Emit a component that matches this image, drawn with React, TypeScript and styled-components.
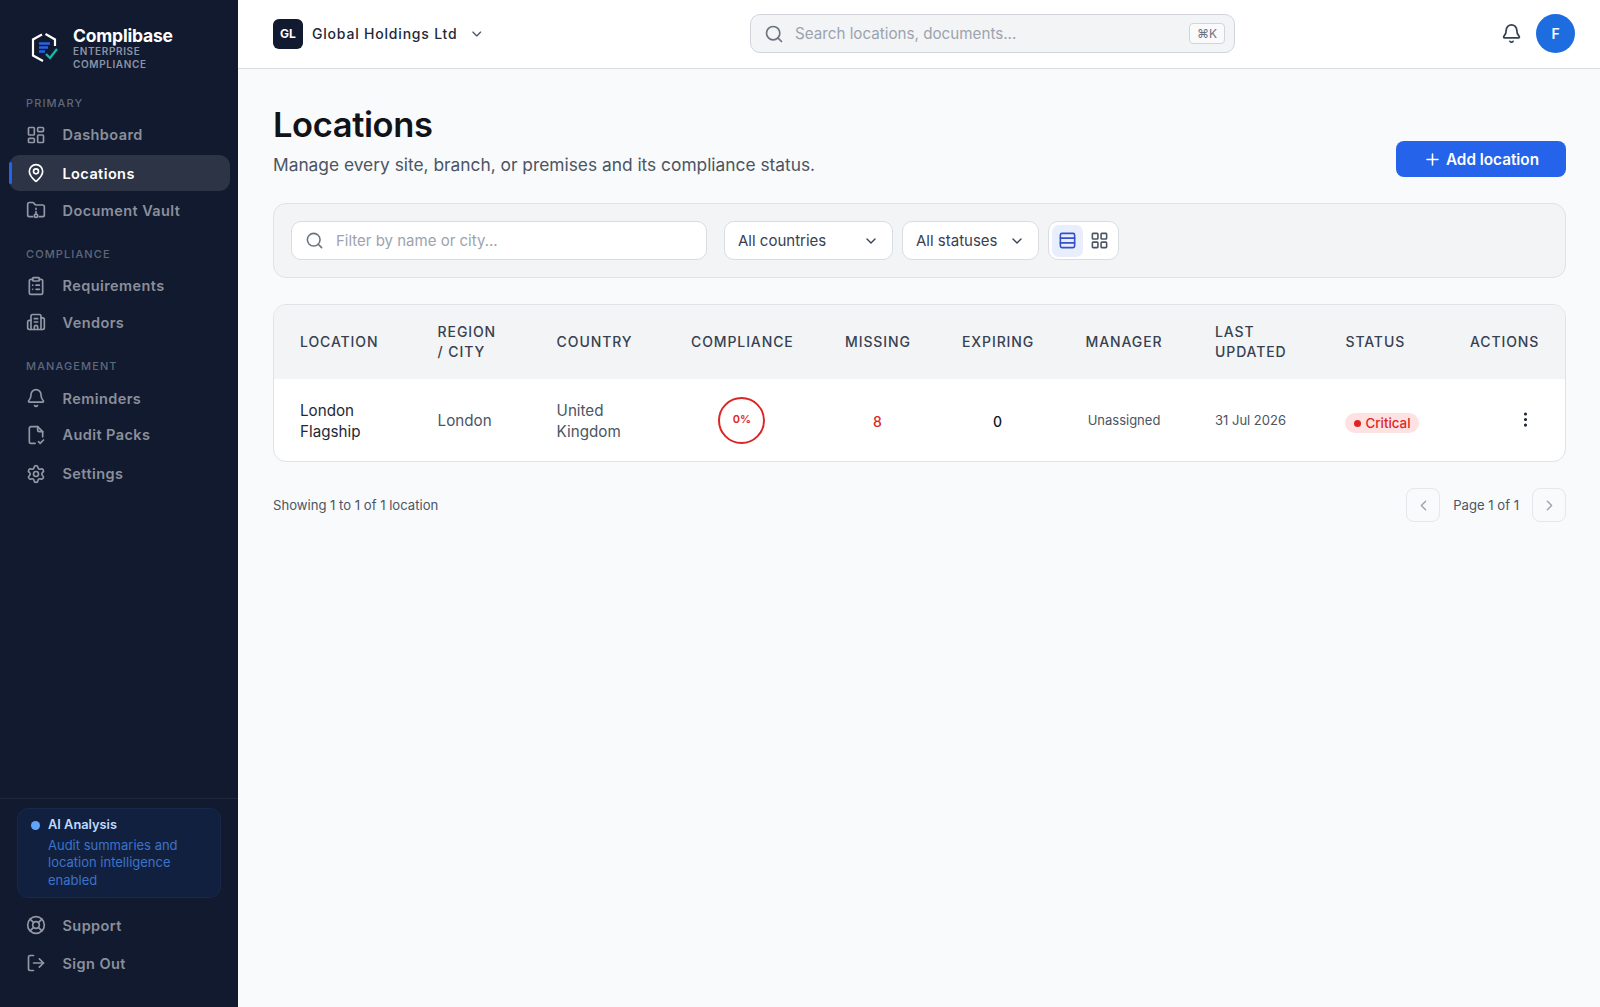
import React from "react";
import styled, { createGlobalStyle } from "styled-components";
import {
  Bell,
  Building2,
  ChevronDown,
  ChevronLeft,
  ChevronRight,
  ClipboardList,
  EllipsisVertical,
  LayoutDashboard,
  LayoutGrid,
  LifeBuoy,
  LogOut,
  MapPin,
  Plus,
  Rows3,
  Search,
  Settings,
} from "lucide-react";

const GlobalStyle = createGlobalStyle`
  * { box-sizing: border-box; }
  html, body { margin: 0; padding: 0; height: 100%; }
  body { font-family: Inter, "Liberation Sans", sans-serif; background: #f9fafb; color: #111827; }
`;

function AuditIcon() {
  return (
    <svg width="20" height="20" viewBox="0 0 24 24" fill="none" stroke="currentColor" strokeWidth="2" strokeLinecap="round" strokeLinejoin="round">
      <path d="M11 22H6a2 2 0 0 1-2-2V4a2 2 0 0 1 2-2h8l6 6v6" />
      <path d="M14 2v4a2 2 0 0 0 2 2h4" />
      <path d="m15 20 2 2 4-4" />
    </svg>
  );
}

function VaultIcon() {
  return (
    <svg width="20" height="20" viewBox="0 0 24 24" fill="none" stroke="currentColor" strokeWidth="2" strokeLinecap="round" strokeLinejoin="round">
      <path d="M8 20H4a2 2 0 0 1-2-2V5a2 2 0 0 1 2-2h3.9a2 2 0 0 1 1.69.9l.81 1.2a2 2 0 0 0 1.67.9H20a2 2 0 0 1 2 2v10a2 2 0 0 1-2 2h-4" />
      <path d="M12 10v1M12 14v2" />
      <circle cx="12" cy="19" r="2" />
    </svg>
  );
}

function Logo() {
  return (
    <svg width="30" height="32" viewBox="0 0 30 32" fill="none">
      <path d="M12 2.5 3 7.5v16l10 5.5" stroke="#fff" strokeWidth="2.2" />
      <path d="M15.5 2 25 7.5V14" stroke="#fff" strokeWidth="2.2" />
      <path d="M9 11.5h11M9 15.5h9M9 19.5h6" stroke="#2563eb" strokeWidth="2.4" />
      <path d="M16 22l4 4 7-9" stroke="#14b8a6" strokeWidth="2.4" />
    </svg>
  );
}

export default function App() {
  return (
    <>
      <GlobalStyle />
      <Shell>
        <Sidebar>
          <Brand>
            <Logo />
            <BrandText>
              <BrandName>Complibase</BrandName>
              <BrandTag>
                ENTERPRISE
                <br />
                COMPLIANCE
              </BrandTag>
            </BrandText>
          </Brand>
          <Section>
            <SectionLabel>PRIMARY</SectionLabel>
            <NavItem>
              <LayoutDashboard size={20} />
              Dashboard
            </NavItem>
            <NavItem $active $push>
              <MapPin size={20} />
              Locations
            </NavItem>
            <NavItem>
              <VaultIcon />
              Document Vault
            </NavItem>
          </Section>
          <Section>
            <SectionLabel>COMPLIANCE</SectionLabel>
            <NavItem>
              <ClipboardList size={20} />
              Requirements
            </NavItem>
            <NavItem>
              <Building2 size={20} />
              Vendors
            </NavItem>
          </Section>
          <Section>
            <SectionLabel>MANAGEMENT</SectionLabel>
            <NavItem>
              <Bell size={20} />
              Reminders
            </NavItem>
            <NavItem>
              <AuditIcon />
              Audit Packs
            </NavItem>
            <NavItem $push>
              <Settings size={20} />
              Settings
            </NavItem>
          </Section>
          <SidebarFoot>
            <AiCard>
              <AiDot />
              <div>
                <AiTitle>AI Analysis</AiTitle>
                <AiText>Audit summaries and location intelligence enabled</AiText>
              </div>
            </AiCard>
            <NavItem>
              <LifeBuoy size={20} />
              Support
            </NavItem>
            <NavItem>
              <LogOut size={20} />
              Sign Out
            </NavItem>
          </SidebarFoot>
        </Sidebar>

        <Main>
          <TopBar>
            <OrgSwitch>
              <OrgBadge>GL</OrgBadge>
              <OrgName>Global Holdings Ltd</OrgName>
              <ChevronDown size={16} color="#4b5563" />
            </OrgSwitch>
            <GlobalSearch>
              <Search size={20} color="#6b7280" />
              <GlobalSearchText>Search locations, documents...</GlobalSearchText>
              <Kbd>⌘K</Kbd>
            </GlobalSearch>
            <TopActions>
              <Bell size={21} color="#374151" />
              <Avatar>F</Avatar>
            </TopActions>
          </TopBar>

          <Content>
            <PageHead>
              <div>
                <PageTitle>Locations</PageTitle>
                <PageSub>Manage every site, branch, or premises and its compliance status.</PageSub>
              </div>
              <AddButton>
                <Plus size={19} />
                Add location
              </AddButton>
            </PageHead>

            <FilterCard>
              <FilterInput>
                <Search size={19} color="#6b7280" />
                <FilterPlaceholder>Filter by name or city...</FilterPlaceholder>
              </FilterInput>
              <Select $width={169}>
                All countries
                <ChevronDown size={16} color="#374151" />
              </Select>
              <Select $width={137}>
                All statuses
                <ChevronDown size={16} color="#374151" />
              </Select>
              <ViewToggle>
                <ViewButton $active>
                  <Rows3 size={19} />
                </ViewButton>
                <ViewButton>
                  <LayoutGrid size={19} />
                </ViewButton>
              </ViewToggle>
            </FilterCard>

            <TableCard>
              <Table>
                <colgroup>
                  {[137.6, 119, 134.4, 154, 117, 123, 130, 130.5, 124.5, 121].map((w, i) => (
                    <col key={i} style={{ width: w }} />
                  ))}
                </colgroup>
                <thead>
                  <tr>
                    <Th>LOCATION</Th>
                    <Th>REGION / CITY</Th>
                    <Th>COUNTRY</Th>
                    <Th $center>COMPLIANCE</Th>
                    <Th $center>MISSING</Th>
                    <Th $center>EXPIRING</Th>
                    <Th $center>MANAGER</Th>
                    <Th>LAST UPDATED</Th>
                    <Th>STATUS</Th>
                    <Th>ACTIONS</Th>
                  </tr>
                </thead>
                <tbody>
                  <tr>
                    <Td $strong>London Flagship</Td>
                    <Td>London</Td>
                    <Td>United Kingdom</Td>
                    <Td $center>
                      <Gauge>0%</Gauge>
                    </Td>
                    <Td $center>
                      <Count $red>8</Count>
                    </Td>
                    <Td $center>
                      <Count>0</Count>
                    </Td>
                    <Td $center $small>Unassigned</Td>
                    <Td $small>31 Jul 2026</Td>
                    <Td>
                      <Badge>
                        <BadgeDot />
                        Critical
                      </Badge>
                    </Td>
                    <Td>
                      <Kebab>
                        <EllipsisVertical size={19} />
                      </Kebab>
                    </Td>
                  </tr>
                </tbody>
              </Table>
            </TableCard>

            <TableFoot>
              <span>Showing 1 to 1 of 1 location</span>
              <Pager>
                <PageButton>
                  <ChevronLeft size={17} />
                </PageButton>
                <PageText>Page 1 of 1</PageText>
                <PageButton>
                  <ChevronRight size={17} />
                </PageButton>
              </Pager>
            </TableFoot>
          </Content>
        </Main>
      </Shell>
    </>
  );
}

const Shell = styled.div`
  display: flex;
  height: 100vh;
  overflow: hidden;
`;

const Sidebar = styled.aside`
  width: 238px;
  flex: none;
  background: #111a2e;
  display: flex;
  flex-direction: column;
  padding: 0 8px 0 9px;
`;

const Brand = styled.div`
  display: flex;
  align-items: flex-start;
  gap: 14px;
  padding: 26px 0 0 21px;
  height: 92px;
  svg {
    margin: 6px 0 0 0;
    flex: none;
  }
`;

const BrandText = styled.div`
  margin-left: -1px;
`;

const BrandName = styled.div`
  color: #fff;
  font-size: 17.5px;
  font-weight: 700;
  line-height: 19px;
  letter-spacing: -0.2px;
`;

const BrandTag = styled.div`
  color: #8b93a7;
  font-size: 10px;
  font-weight: 600;
  line-height: 13px;
  letter-spacing: 0.62px;
`;

const Section = styled.div`
  display: flex;
  flex-direction: column;
  gap: 0.7px;
  margin-bottom: 15px;
`;

const SectionLabel = styled.div`
  color: #5f687b;
  font-size: 11px;
  font-weight: 500;
  letter-spacing: 1.1px;
  line-height: 14px;
  padding: 4px 0 6px 17px;
`;

const NavItem = styled.div<{ $active?: boolean; $push?: boolean }>`
  position: relative;
  display: flex;
  align-items: center;
  flex: none;
  gap: 17px;
  height: 36px;
  margin-top: ${(p) => (p.$push ? "2px" : "0")};
  padding-left: 16.5px;
  border-radius: 11px;
  font-size: 14.5px;
  font-weight: 600;
  letter-spacing: 0.42px;
  color: ${(p) => (p.$active ? "#ffffff" : "#8b8f9b")};
  background: ${(p) => (p.$active ? "#2c3445" : "transparent")};
  svg {
    flex: none;
    color: ${(p) => (p.$active ? "#ffffff" : "#9298a5")};
  }
  ${(p) =>
    p.$active
      ? `&::before {
    content: "";
    position: absolute;
    left: 0;
    top: 7px;
    bottom: 7px;
    width: 3px;
    border-radius: 2px;
    background: #2563eb;
  }`
      : ""}
`;

const SidebarFoot = styled.div`
  margin: auto -8px 0 -9px;
  padding: 9px 8px 26px 9px;
  border-top: 1px solid #1f2839;
  display: flex;
  flex-direction: column;
  gap: 2px;
`;

const AiCard = styled.div`
  display: flex;
  gap: 8px;
  margin: 0 9px 7px 8px;
  padding: 7px 12px 8px 13px;
  border: 1px solid #18274a;
  border-radius: 11px;
  background: #122040;
`;

const AiDot = styled.span`
  width: 9px;
  height: 9px;
  margin-top: 5px;
  flex: none;
  border-radius: 50%;
  background: #60a5fa;
`;

const AiTitle = styled.div`
  color: #bfdbfe;
  font-size: 12.8px;
  font-weight: 600;
  line-height: 18px;
`;

const AiText = styled.div`
  color: #3b73c9;
  font-size: 13px;
  line-height: 17.4px;
  margin-top: 3px;
`;

const Main = styled.div`
  flex: 1;
  min-width: 0;
  display: flex;
  flex-direction: column;
`;

const TopBar = styled.header`
  height: 69px;
  flex: none;
  background: #fff;
  border-bottom: 1px solid #d9dce1;
  display: flex;
  align-items: center;
  justify-content: space-between;
  padding: 0 25px 1px 35px;
`;

const OrgSwitch = styled.div`
  display: flex;
  align-items: center;
  gap: 9px;
  width: 211px;
`;

const OrgBadge = styled.div`
  width: 30px;
  height: 30px;
  flex: none;
  border-radius: 6px;
  background: #111a2e;
  color: #fff;
  font-size: 12px;
  font-weight: 700;
  display: flex;
  align-items: center;
  justify-content: center;
`;

const OrgName = styled.div`
  font-size: 14px;
  font-weight: 500;
  letter-spacing: 0.8px;
  color: #1f2937;
  margin-right: 2px;
  white-space: nowrap;
`;

const GlobalSearch = styled.div`
  width: 485px;
  height: 39px;
  border: 1px solid #d1d5db;
  border-radius: 10px;
  background: #f3f4f6;
  display: flex;
  align-items: center;
  padding: 0 9px 0 13px;
  gap: 11px;
`;

const GlobalSearchText = styled.span`
  flex: 1;
  color: #9ca3af;
  font-size: 15.2px;
`;

const Kbd = styled.span`
  border: 1px solid #d1d5db;
  border-radius: 4px;
  background: #f9fafb;
  color: #6b7280;
  font-size: 12px;
  height: 21px;
  padding: 0 7px;
  display: flex;
  align-items: center;
`;

const TopActions = styled.div`
  display: flex;
  align-items: center;
  gap: 14px;
`;

const Avatar = styled.div`
  width: 39px;
  height: 39px;
  border-radius: 50%;
  background: #1d6ce0;
  color: #fff;
  font-size: 14px;
  font-weight: 600;
  display: flex;
  align-items: center;
  justify-content: center;
`;

const Content = styled.main`
  flex: 1;
  padding: 36px 34px 0 35px;
  background: #f9fafb;
`;

const PageHead = styled.div`
  display: flex;
  justify-content: space-between;
  align-items: flex-end;
  margin-bottom: 26px;
`;

const PageTitle = styled.h1`
  margin: 0;
  font-size: 34.5px;
  font-weight: 600;
  line-height: 40px;
  letter-spacing: -0.4px;
  color: #111318;
`;

const PageSub = styled.p`
  margin: 8px 0 0;
  font-size: 17.33px;
  line-height: 24px;
  color: #4b5563;
`;

const AddButton = styled.button`
  width: 170px;
  height: 36px;
  border: none;
  border-radius: 8px;
  background: #2563eb;
  color: #fff;
  font-family: inherit;
  font-size: 15.3px;
  font-weight: 600;
  display: flex;
  align-items: center;
  justify-content: center;
  gap: 4px;
`;

const FilterCard = styled.div`
  height: 75px;
  border: 1px solid #dfe2e6;
  border-radius: 13px;
  background: #f3f4f6;
  display: flex;
  align-items: center;
  padding: 0 17px;
  gap: 9px;
`;

const FilterInput = styled.div`
  width: 416px;
  height: 39px;
  margin-right: 8px;
  border: 1px solid #d9dce1;
  border-radius: 10px;
  background: #fff;
  display: flex;
  align-items: center;
  gap: 12px;
  padding: 0 13px;
`;

const FilterPlaceholder = styled.span`
  color: #9ca3af;
  font-size: 15px;
`;

const Select = styled.div<{ $width: number }>`
  width: ${(p) => p.$width}px;
  height: 39px;
  border: 1px solid #d9dce1;
  border-radius: 10px;
  background: #fff;
  display: flex;
  align-items: center;
  justify-content: space-between;
  padding: 0 13px;
  color: #374151;
  font-size: 15px;
`;

const ViewToggle = styled.div`
  width: 71px;
  height: 39px;
  border: 1px solid #d9dce1;
  border-radius: 10px;
  background: #fff;
  display: flex;
  align-items: center;
  gap: 1px;
  padding: 0 3px;
`;

const ViewButton = styled.div<{ $active?: boolean }>`
  width: 31px;
  height: 32px;
  border-radius: 7px;
  display: flex;
  align-items: center;
  justify-content: center;
  background: ${(p) => (p.$active ? "#e8eefc" : "transparent")};
  color: ${(p) => (p.$active ? "#3451c9" : "#4b5563")};
`;

const TableCard = styled.div`
  margin-top: 26px;
  height: 158px;
  border: 1px solid #dfe2e6;
  border-radius: 13px;
  background: #fff;
  overflow: hidden;
`;

const Table = styled.table`
  width: 100%;
  table-layout: fixed;
  border-collapse: collapse;
`;

const Th = styled.th<{ $center?: boolean }>`
  height: 74px;
  padding: 0 26px;
  background: #f3f4f6;
  color: #374151;
  font-size: 14px;
  font-weight: 500;
  letter-spacing: 0.9px;
  line-height: 20px;
  white-space: normal;
  text-align: ${(p) => (p.$center ? "center" : "left")};
`;

const Td = styled.td<{ $center?: boolean; $strong?: boolean; $small?: boolean }>`
  height: 82px;
  padding: 2px 0 0 26px;
  padding-right: ${(p) => (p.$center ? "26px" : "18px")};
  font-size: ${(p) => (p.$small ? "13px" : "15.2px")};
  line-height: 21.5px;
  color: ${(p) => (p.$strong ? "#1f2937" : "#4b5563")};
  text-align: ${(p) => (p.$center ? "center" : "left")};
`;

const Gauge = styled.div`
  width: 47px;
  height: 47px;
  margin: -2px auto 0;
  border: 2px solid #dc2626;
  border-radius: 50%;
  color: #dc2626;
  font-size: 11px;
  font-weight: 600;
  display: flex;
  align-items: center;
  justify-content: center;
`;

const Count = styled.span<{ $red?: boolean }>`
  position: relative;
  top: 1px;
  font-size: 14px;
  font-weight: 500;
  color: ${(p) => (p.$red ? "#dc2626" : "#111827")};
`;

const Badge = styled.span`
  position: relative;
  top: 1px;
  display: inline-flex;
  align-items: center;
  gap: 4px;
  height: 20px;
  padding: 0 9px;
  border-radius: 10px;
  background: #fee2e2;
  color: #dc2626;
  font-size: 13.3px;
  font-weight: 500;
`;

const BadgeDot = styled.span`
  width: 7px;
  height: 7px;
  border-radius: 50%;
  background: #dc2626;
`;

const Kebab = styled.div`
  position: relative;
  top: -2px;
  display: flex;
  justify-content: flex-end;
  margin-right: 12px;
  color: #1f2937;
`;

const TableFoot = styled.div`
  margin-top: 26px;
  display: flex;
  align-items: center;
  justify-content: space-between;
  color: #4b5563;
  font-size: 13.1px;
`;

const Pager = styled.div`
  display: flex;
  align-items: center;
  gap: 13px;
`;

const PageButton = styled.div`
  width: 34px;
  height: 34px;
  border: 1px solid #e5e7eb;
  border-radius: 8px;
  display: flex;
  align-items: center;
  justify-content: center;
  color: #9ca3af;
`;

const PageText = styled.span`
  color: #4b5563;
  font-size: 13.1px;
`;
